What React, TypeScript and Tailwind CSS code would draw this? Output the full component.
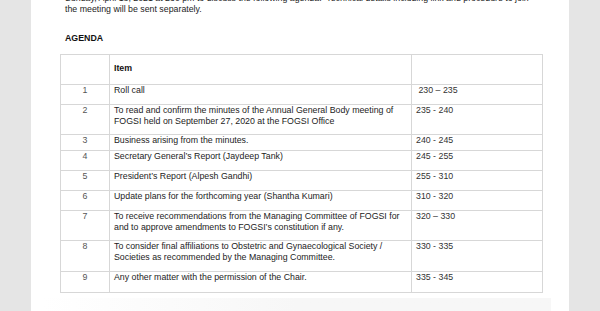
import React from "react";

const rows: { n: string; item: string[]; time: string; h: string }[] = [
  { n: "1", item: ["Roll call"], time: "\u00a0230 \u2013 235", h: "h-[20px]" },
  {
    n: "2",
    item: [
      "To read and confirm the minutes of the Annual General Body meeting of",
      "FOGSI held on September 27, 2020 at the FOGSI Office",
    ],
    time: "235 - 240",
    h: "h-[30px]",
  },
  { n: "3", item: ["Business arising from the minutes."], time: "240 - 245", h: "h-[16px]" },
  { n: "4", item: ["Secretary General\u2019s Report (Jaydeep Tank)"], time: "245 - 255", h: "h-[20px]" },
  { n: "5", item: ["President\u2019s Report (Alpesh Gandhi)"], time: "255 - 310", h: "h-[20px]" },
  { n: "6", item: ["Update plans for the forthcoming year (Shantha Kumari)"], time: "310 - 320", h: "h-[20px]" },
  {
    n: "7",
    item: [
      "To receive recommendations from the Managing Committee of FOGSI for",
      "and to approve amendments to FOGSI\u2019s constitution if any.",
    ],
    time: "320 \u2013 330",
    h: "h-[30px]",
  },
  {
    n: "8",
    item: [
      "To consider final affiliations to Obstetric and Gynaecological Society /",
      "Societies as recommended by the Managing Committee.",
    ],
    time: "330 - 335",
    h: "h-[31px]",
  },
  { n: "9", item: ["Any other matter with the permission of the Chair."], time: "335 - 345", h: "h-[21px]" },
];

export default function App() {
  return (
    <div
      className="w-[600px] h-[311px] overflow-hidden bg-[#e5e5e5] flex"
      style={{ fontFamily: '"Liberation Sans", Arial, sans-serif' }}
    >
      <div className="ml-[31px] w-[538px] h-full bg-white flex flex-col text-[8.8px] leading-[11px] text-[#1c1c1c]">
        <p className="pl-[34px] mt-[-7.5px] whitespace-nowrap">
          Sunday, April 18, 2021 at 230 pm to discuss the following agenda.&nbsp; Technical details including link and procedure to join
          <br />
          the meeting will be sent separately.
        </p>
        <p className="pl-[34px] mt-[18.5px] font-bold text-[#111]">AGENDA</p>
        <div className="ml-[29px] mt-[10px] w-[483px] border-t border-l border-r border-[#d7d7d7] flex flex-col">
          <div className="grid grid-cols-[49px_302px_130px] h-[30px] border-b border-[#d7d7d7]">
            <div className="border-r border-[#d7d7d7]" />
            <div className="border-r border-[#d7d7d7] pl-[4px] pt-[8px] font-bold text-[#111]">Item</div>
            <div />
          </div>
          {rows.map((r) => (
            <div
              key={r.n}
              className={`grid grid-cols-[49px_302px_130px] border-b border-[#d7d7d7] ${r.h}`}
            >
              <div className="border-r border-[#d7d7d7] text-center text-[#555] pt-[0px]">{r.n}</div>
              <div className="border-r border-[#d7d7d7] pl-[4px] pt-[0px] whitespace-nowrap">
                {r.item.map((l, i) => (
                  <div key={i}>{l}</div>
                ))}
              </div>
              <div className="pl-[4px] pt-[0px] text-[#333] whitespace-pre">{r.time}</div>
            </div>
          ))}
        </div>
        <div className="mt-[5px] ml-[12px] w-[508px] flex-1 bg-gradient-to-r from-white via-[#f7f7f7] to-[#f7f7f7]" />
      </div>
    </div>
  );
}
